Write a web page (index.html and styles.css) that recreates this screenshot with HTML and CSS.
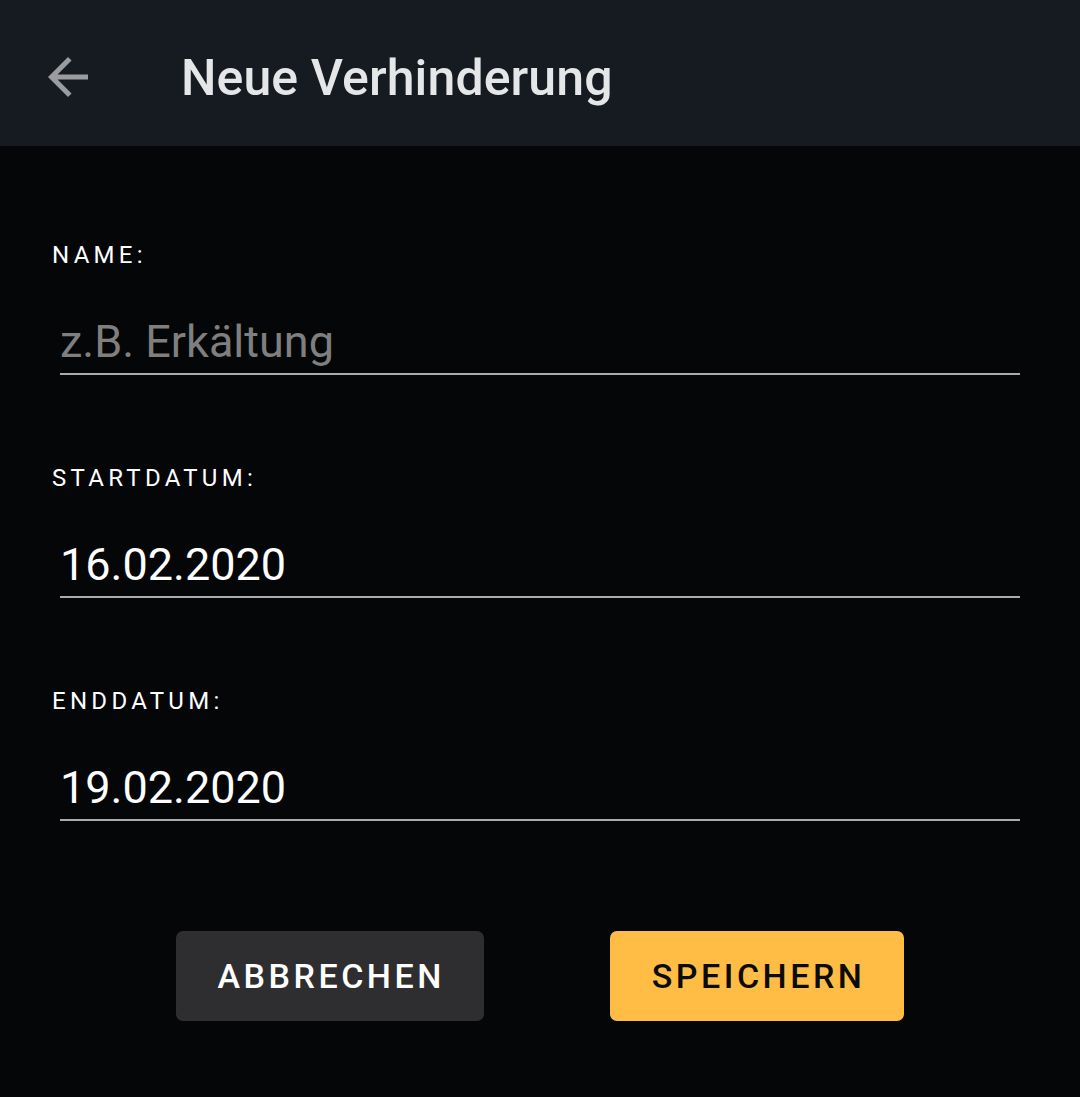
FILE: index.html
```html
<!DOCTYPE html>
<html lang="de">
<head>
<meta charset="utf-8">
<title>Neue Verhinderung</title>
<link rel="stylesheet" href="styles.css">
</head>
<body>
<header class="appbar">
  <button class="back" aria-label="Zurück">
    <svg viewBox="0 0 24 24" width="60" height="60"><path d="M20 11H7.83l5.59-5.59L12 4l-8 8 8 8 1.41-1.41L7.83 13H20v-2z" fill="currentColor"/></svg>
  </button>
  <h1 class="title">Neue Verhinderung</h1>
</header>
<main class="form">
  <div class="field">
    <label class="label">Name:</label>
    <div class="input placeholder">z.B. Erkältung</div>
  </div>
  <div class="field">
    <label class="label">Startdatum:</label>
    <div class="input">16.02.2020</div>
  </div>
  <div class="field">
    <label class="label">Enddatum:</label>
    <div class="input">19.02.2020</div>
  </div>
  <div class="actions">
    <button class="btn btn-cancel">Abbrechen</button>
    <button class="btn btn-save">Speichern</button>
  </div>
</main>
</body>
</html>
```
FILE: styles.css
```css
html, body {
  margin: 0;
  padding: 0;
}
body {
  background: #050608;
  font-family: Roboto, "Noto Sans", sans-serif;
  width: 1080px;
  height: 1097px;
  overflow: hidden;
}
.appbar {
  height: 146px;
  background: #161a21;
  display: flex;
  align-items: center;
  box-sizing: border-box;
}
.back {
  background: none;
  border: 0;
  padding: 0;
  margin: 0 0 0 38px;
  width: 60px;
  height: 60px;
  color: #9b9c9f;
  display: flex;
  align-self: flex-start;
  margin-top: 47px;
}
.back svg { display: block; }
.title {
  margin: 0 0 0 83px;
  font-size: 50px;
  font-weight: 500;
  letter-spacing: 0.1px;
  color: #e4e6e8;
  line-height: 60px;
  align-self: flex-start;
  margin-top: 48px;
}
.form {
  padding: 97px 60px 0 60px;
}
.field {
  margin-bottom: 91px;
}
.label {
  display: block;
  margin-left: -8px;
  font-size: 24px;
  line-height: 24px;
  letter-spacing: 4.3px;
  text-transform: uppercase;
  color: #ffffff;
}
.input {
  margin-top: 48px;
  font-size: 45px;
  line-height: 53px;
  padding-bottom: 5px;
  color: #ffffff;
  border-bottom: 2px solid #ababab;
}
.input.placeholder {
  color: #7f7f7f;
}
.actions {
  display: flex;
  justify-content: center;
  gap: 126px;
  margin-top: 110px;
}
.btn {
  height: 90px;
  border: 0;
  border-radius: 7px;
  padding: 0 39px 0 42px;
  font-family: Roboto, sans-serif;
  font-size: 34px;
  font-weight: 500;
  letter-spacing: 3.5px;
  text-transform: uppercase;
}
.btn-cancel {
  background: #2e2e30;
  color: #ffffff;
}
.btn-save {
  background: #ffbd45;
  color: #0b0b0b;
}
```
